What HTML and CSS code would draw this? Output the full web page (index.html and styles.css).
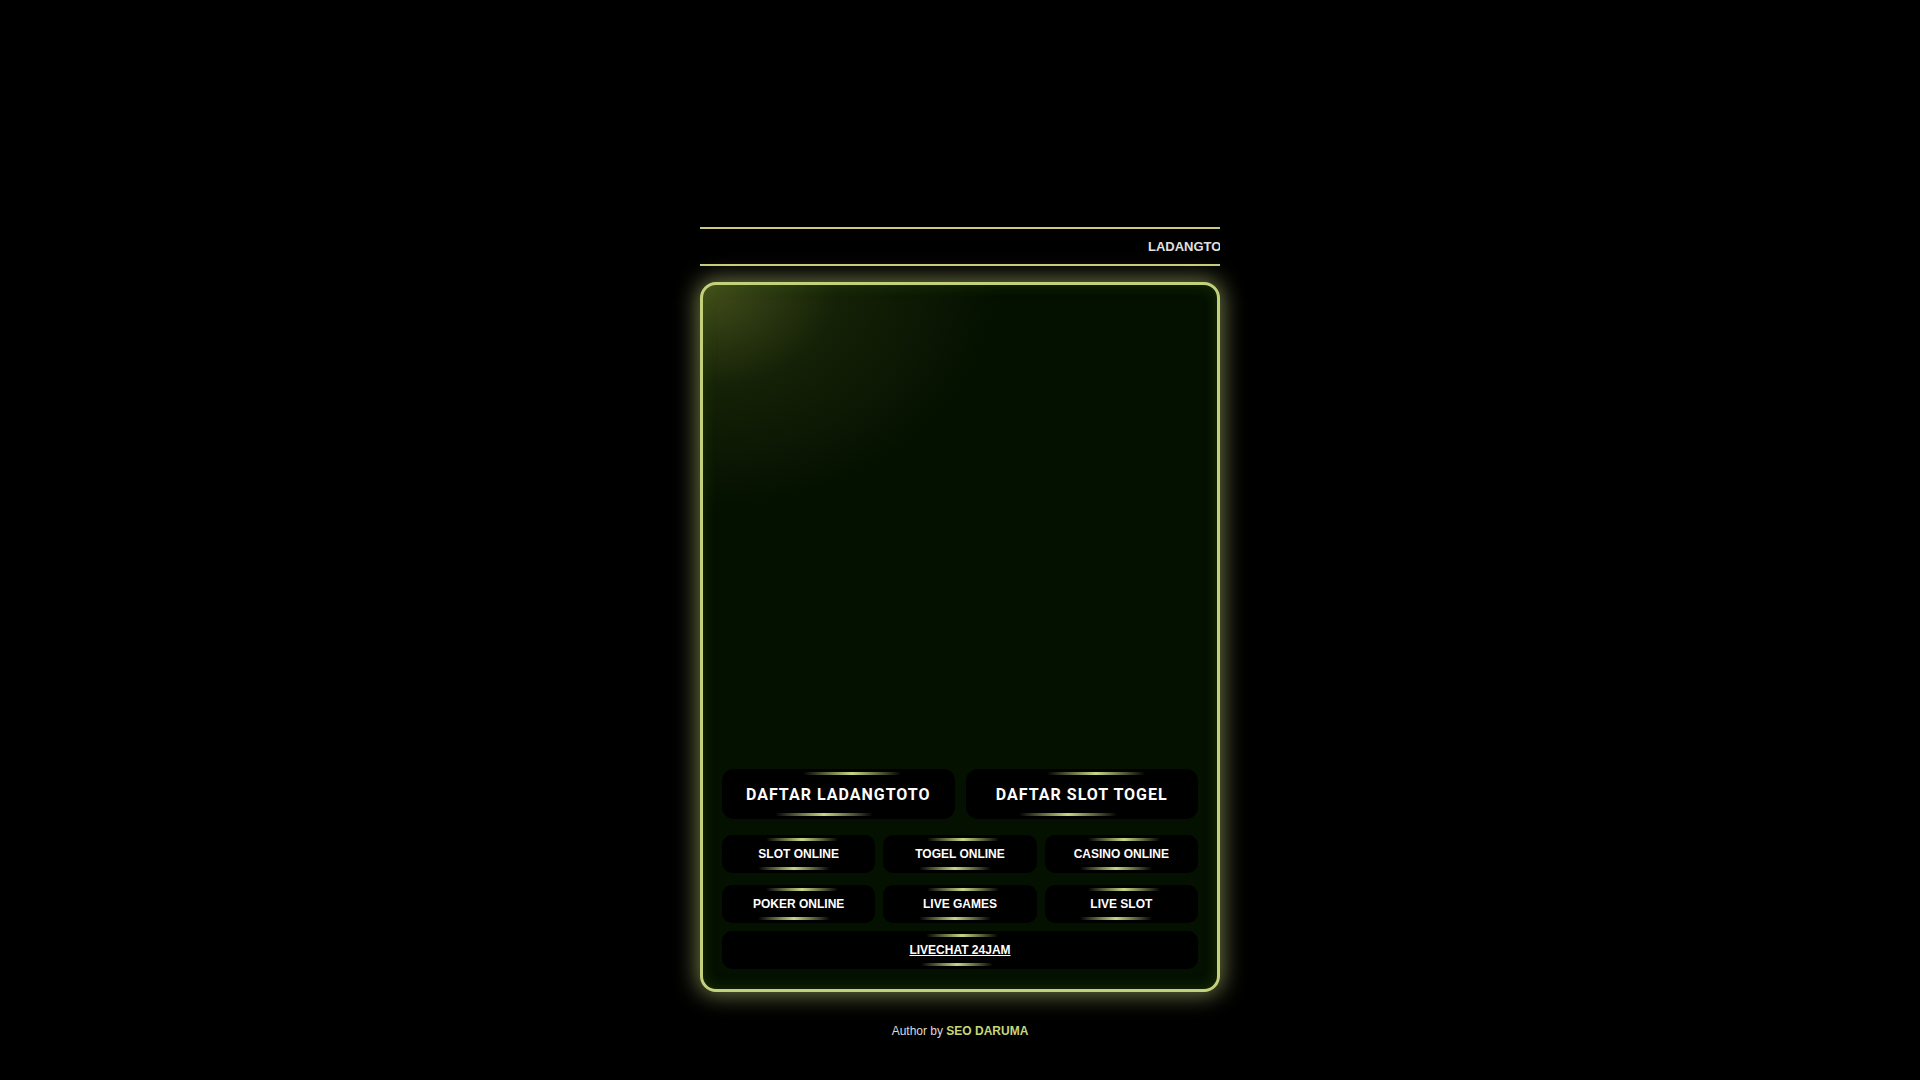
FILE: index.html
```html
<!DOCTYPE html>
<html lang="id">
<head>
<meta charset="utf-8">
<title>LADANGTOTO</title>
<link rel="stylesheet" href="styles.css">
</head>
<body>
<div class="wrap">
  <div class="marquee"><span class="marquee-text">LADANGTOTO SITUS SLOT ONLINE DAN TOGEL ONLINE TERPERCAYA</span></div>
  <div class="card">
    <div class="banner"></div>
    <div class="big-row">
      <a class="btn btn-big" href="#">DAFTAR LADANGTOTO</a>
      <a class="btn btn-big" href="#">DAFTAR SLOT TOGEL</a>
    </div>
    <div class="grid">
      <a class="btn btn-small" href="#">SLOT ONLINE</a>
      <a class="btn btn-small" href="#">TOGEL ONLINE</a>
      <a class="btn btn-small" href="#">CASINO ONLINE</a>
      <a class="btn btn-small" href="#">POKER ONLINE</a>
      <a class="btn btn-small" href="#">LIVE GAMES</a>
      <a class="btn btn-small" href="#">LIVE SLOT</a>
    </div>
    <a class="btn btn-small btn-wide" href="#"><span class="u">LIVECHAT 24JAM</span></a>
  </div>
  <p class="author">Author by <b>SEO DARUMA</b></p>
</div>
</body>
</html>
```
FILE: styles.css
```css
html, body {
  margin: 0;
  padding: 0;
  background: #000;
}
body {
  font-family: "Liberation Sans", Arial, sans-serif;
  color: #fff;
}
.wrap {
  width: 520px;
  margin: 0 auto;
  padding-top: 227px;
}
.marquee {
  border-top: 2px solid #cfc97c;
  border-bottom: 2px solid #cfc97c;
  height: 35px;
  overflow: hidden;
  white-space: nowrap;
  display: flex;
  align-items: center;
}
.marquee-text {
  padding-left: 448px;
  font-size: 13px;
  font-weight: 700;
  color: #e0e0e0;
}
.card {
  margin-top: 16px;
  border: 3px solid #c3d17a;
  border-radius: 16px;
  background:
    radial-gradient(ellipse 300px 230px at 0 0, rgba(110, 120, 45, 0.6) 0%, rgba(70, 85, 25, 0.25) 45%, rgba(0, 0, 0, 0) 100%),
    #041000;
  box-shadow: 0 0 22px 3px rgba(195, 209, 122, 0.55), inset 0 0 14px rgba(60, 110, 20, 0.35);
  padding: 0 19px 20px;
}
.banner {
  height: 484px;
}
.btn {
  position: relative;
  display: flex;
  align-items: center;
  justify-content: center;
  background: #000;
  color: #fff;
  text-decoration: none;
  font-weight: 700;
}
.btn::before,
.btn::after {
  content: "";
  position: absolute;
  height: 3px;
  width: 72px;
  left: 50%;
  background: linear-gradient(90deg, rgba(195, 209, 122, 0), #c8d682 50%, rgba(195, 209, 122, 0));
}
.btn::before {
  top: 3px;
  margin-left: -33px;
}
.btn::after {
  bottom: 3px;
  margin-left: -41px;
}
.big-row {
  display: grid;
  grid-template-columns: 1fr 1fr;
  gap: 11px;
}
.btn-big {
  height: 50px;
  border-radius: 12px;
  font-family: Roboto, "Liberation Sans", sans-serif;
  font-size: 16px;
  letter-spacing: 1px;
}
.btn-big::before,
.btn-big::after {
  width: 98px;
}
.btn-big::before {
  margin-left: -35px;
}
.btn-big::after {
  margin-left: -63px;
}
.grid {
  margin-top: 16px;
  display: grid;
  grid-template-columns: repeat(3, 1fr);
  column-gap: 8px;
  row-gap: 12px;
}
.btn-small {
  height: 38px;
  border-radius: 10px;
  font-size: 12px;
}
.btn-wide {
  margin-top: 8px;
}
.btn-wide::before {
  margin-left: -34px;
}
.btn-wide::after {
  margin-left: -39px;
}
.u {
  text-decoration: underline;
}
.author {
  margin: 32px 0 0;
  text-align: center;
  font-size: 12px;
  color: #dcdcdc;
}
.author b {
  color: #c8d67a;
}
```
